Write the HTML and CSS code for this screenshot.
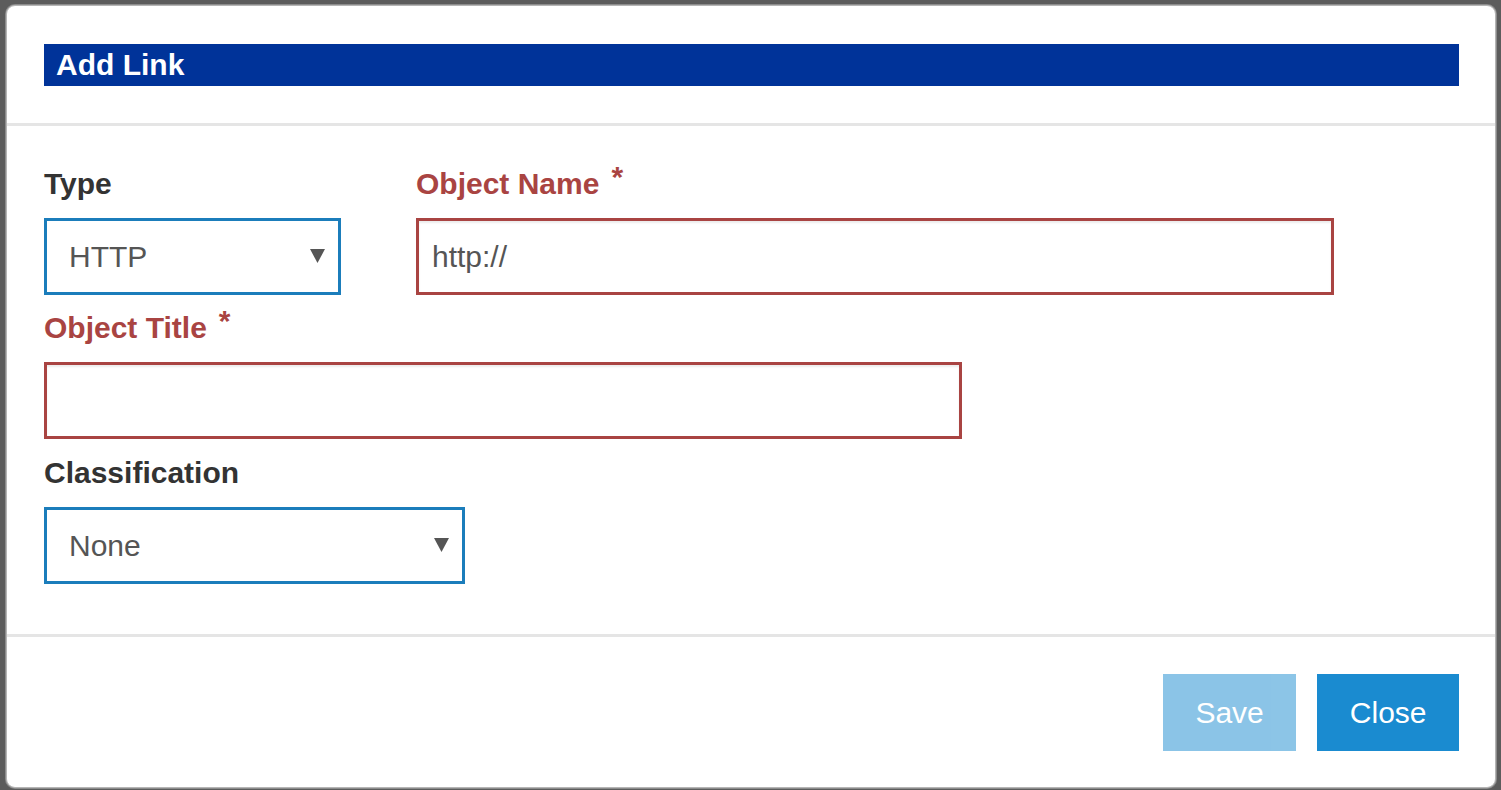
FILE: index.html
```html
<!DOCTYPE html>
<html lang="en">
<head>
    <meta charset="UTF-8">
    <meta name="viewport" content="width=device-width, initial-scale=1.0">
    <title>Add Link</title>
    <link rel="stylesheet" href="styles.css">
</head>
<body>
    <div class="modal">
        <div class="modal-header">
            <h4 class="modal-title">Add Link</h4>
        </div>

        <div class="modal-body">
            <div class="row">
                <div class="form-group col-type">
                    <label for="linkType">Type</label>
                    <div class="select-wrap">
                        <select id="linkType">
                            <option>HTTP</option>
                            <option>FTP</option>
                            <option>File</option>
                        </select>
                        <svg class="caret" width="15" height="14" viewBox="0 0 15 14"><path d="M0 0H15L7.5 14Z"/></svg>
                    </div>
                </div>
                <div class="form-group has-error col-name">
                    <label for="objectName">Object Name<span class="req">*</span></label>
                    <input type="text" id="objectName" value="http://">
                </div>
            </div>

            <div class="form-group has-error col-title">
                <label for="objectTitle">Object Title<span class="req">*</span></label>
                <input type="text" id="objectTitle" value="">
            </div>

            <div class="form-group col-class last">
                <label for="classification">Classification</label>
                <div class="select-wrap">
                    <select id="classification">
                        <option>None</option>
                        <option>Internal</option>
                        <option>Confidential</option>
                    </select>
                    <svg class="caret" width="15" height="14" viewBox="0 0 15 14"><path d="M0 0H15L7.5 14Z"/></svg>
                </div>
            </div>
        </div>

        <div class="modal-footer">
            <button class="btn" disabled>Save</button>
            <button class="btn">Close</button>
        </div>
    </div>
</body>
</html>
```

FILE: styles.css
```css
html, body {
    height: 100%;
}
body {
    margin: 0;
    padding: 5px 5px 2px 6px;
    box-sizing: border-box;
    background-color: #5c5c5c;
    font-family: "Liberation Sans", Arial, sans-serif;
    font-size: 30px;
    color: #333;
    overflow: hidden;
}
.modal {
    background-color: #fff;
    border: 1px solid #b5b5b5;
    border-radius: 9px;
    box-shadow: 0 0 0 1px #8c8c8c;
}
.modal-header {
    padding: 38px 36px 37px 37px;
    border-bottom: 3px solid #e5e5e5;
}
.modal-title {
    margin: 0;
    padding-left: 12px;
    height: 42px;
    line-height: 42px;
    font-size: 30px;
    font-weight: bold;
    color: #fff;
    background-color: #003399;
}
.modal-body {
    padding: 40px 36px 50px 37px;
}
.row {
    display: flex;
    gap: 75px;
}
.form-group {
    margin-bottom: 15px;
}
.form-group.col-title {
    margin-bottom: 16px;
}
.form-group.last {
    margin-bottom: 0;
}
label {
    display: block;
    height: 36px;
    line-height: 36px;
    margin-bottom: 16px;
    font-weight: bold;
    white-space: nowrap;
}
.req {
    position: relative;
    top: -7px;
    margin-left: 12px;
}
.has-error label {
    color: #a94442;
}
input, select {
    display: block;
    width: 100%;
    height: 77px;
    box-sizing: border-box;
    margin: 0;
    font-family: inherit;
    font-size: 30px;
    color: #555;
    background-color: #fff;
    border-radius: 0;
    outline: none;
}
input {
    padding: 0 13px;
    border: 3px solid #a94442;
    box-shadow: inset 0 2px 2px rgba(0, 0, 0, .075);
}
select {
    padding: 0 40px 0 22px;
    border: 3px solid #1b7dbb;
    appearance: none;
    -webkit-appearance: none;
}
.select-wrap {
    position: relative;
}
.caret {
    position: absolute;
    right: 16px;
    top: 31px;
    fill: #555;
    pointer-events: none;
}
.col-type { width: 297px; }
.col-name { width: 918px; }
.col-title { width: 918px; }
.col-class { width: 421px; }

.modal-footer {
    display: flex;
    justify-content: flex-end;
    gap: 21px;
    padding: 37px 36px 36px 37px;
    border-top: 3px solid #e5e5e5;
}
.btn {
    height: 77px;
    padding: 0 32.5px;
    border: none;
    border-radius: 0;
    font-family: inherit;
    font-size: 30px;
    color: #fff;
    background-color: #1a8bd0;
    cursor: pointer;
}
.btn:hover {
    background-color: #1679b5;
}
.btn:disabled {
    opacity: .5;
    cursor: default;
}
```
